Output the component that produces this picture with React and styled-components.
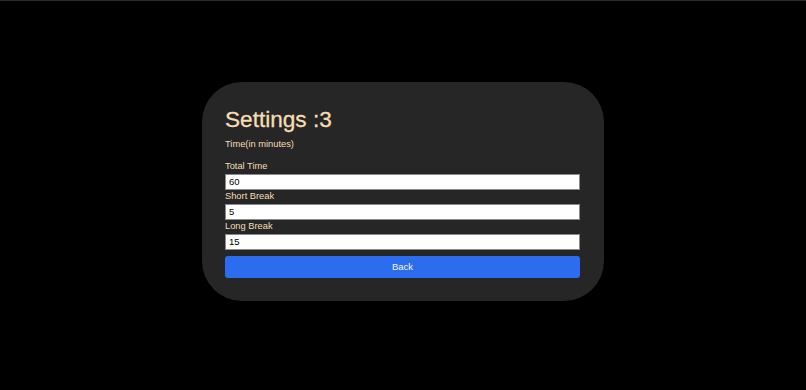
import React from "react";
import styled, { createGlobalStyle } from "styled-components";

const Global = createGlobalStyle`
  * { box-sizing: border-box; }
  html, body { margin: 0; padding: 0; background: #000; }
  body { font-family: "Liberation Sans", Arial, Helvetica, sans-serif; }
`;

const Page = styled.div`
  min-height: 100vh;
  border-top: 1px solid #2a2a2a;
  padding-bottom: 9px;
  display: flex;
  align-items: center;
  justify-content: center;
`;

const Card = styled.div`
  width: 402px;
  background: #262626;
  border-radius: 40px;
  padding: 25px 24px 23px 23px;
  color: #f5deb3;
  display: flex;
  flex-direction: column;
`;

const Title = styled.h1`
  margin: 0;
  font-size: 22.6px;
  font-weight: 400;
  line-height: 25px;
  -webkit-text-stroke: 0.3px #f5deb3;
`;

const Subtitle = styled.p`
  margin: 7px 0 11px;
  font-size: 9.3px;
  line-height: 10px;
`;

const Field = styled.label`
  display: flex;
  flex-direction: column;
`;

const Label = styled.span`
  font-size: 9.3px;
  line-height: 12px;
  margin-bottom: 2px;
`;

const Input = styled.input`
  height: 16px;
  width: 100%;
  margin: 0;
  padding: 0 3px;
  border: 1px solid #8a8a8a;
  background: #fff;
  color: #000;
  font-family: "Liberation Sans", Arial, sans-serif;
  font-size: 9.5px;
  outline: none;
`;

const Button = styled.button`
  margin-top: 6px;
  height: 22px;
  width: 100%;
  border: none;
  border-radius: 3px;
  background: #2c6df0;
  color: #f4f6ff;
  font-family: "Liberation Sans", Arial, sans-serif;
  font-size: 9.5px;
  cursor: pointer;
`;

const fields = [
  { label: "Total Time", value: "60" },
  { label: "Short Break", value: "5" },
  { label: "Long Break", value: "15" },
];

export default function App() {
  return (
    <>
      <Global />
      <Page>
        <Card>
          <Title>Settings :3</Title>
          <Subtitle>Time(in minutes)</Subtitle>
          {fields.map((f) => (
            <Field key={f.label}>
              <Label>{f.label}</Label>
              <Input type="text" defaultValue={f.value} />
            </Field>
          ))}
          <Button>Back</Button>
        </Card>
      </Page>
    </>
  );
}
